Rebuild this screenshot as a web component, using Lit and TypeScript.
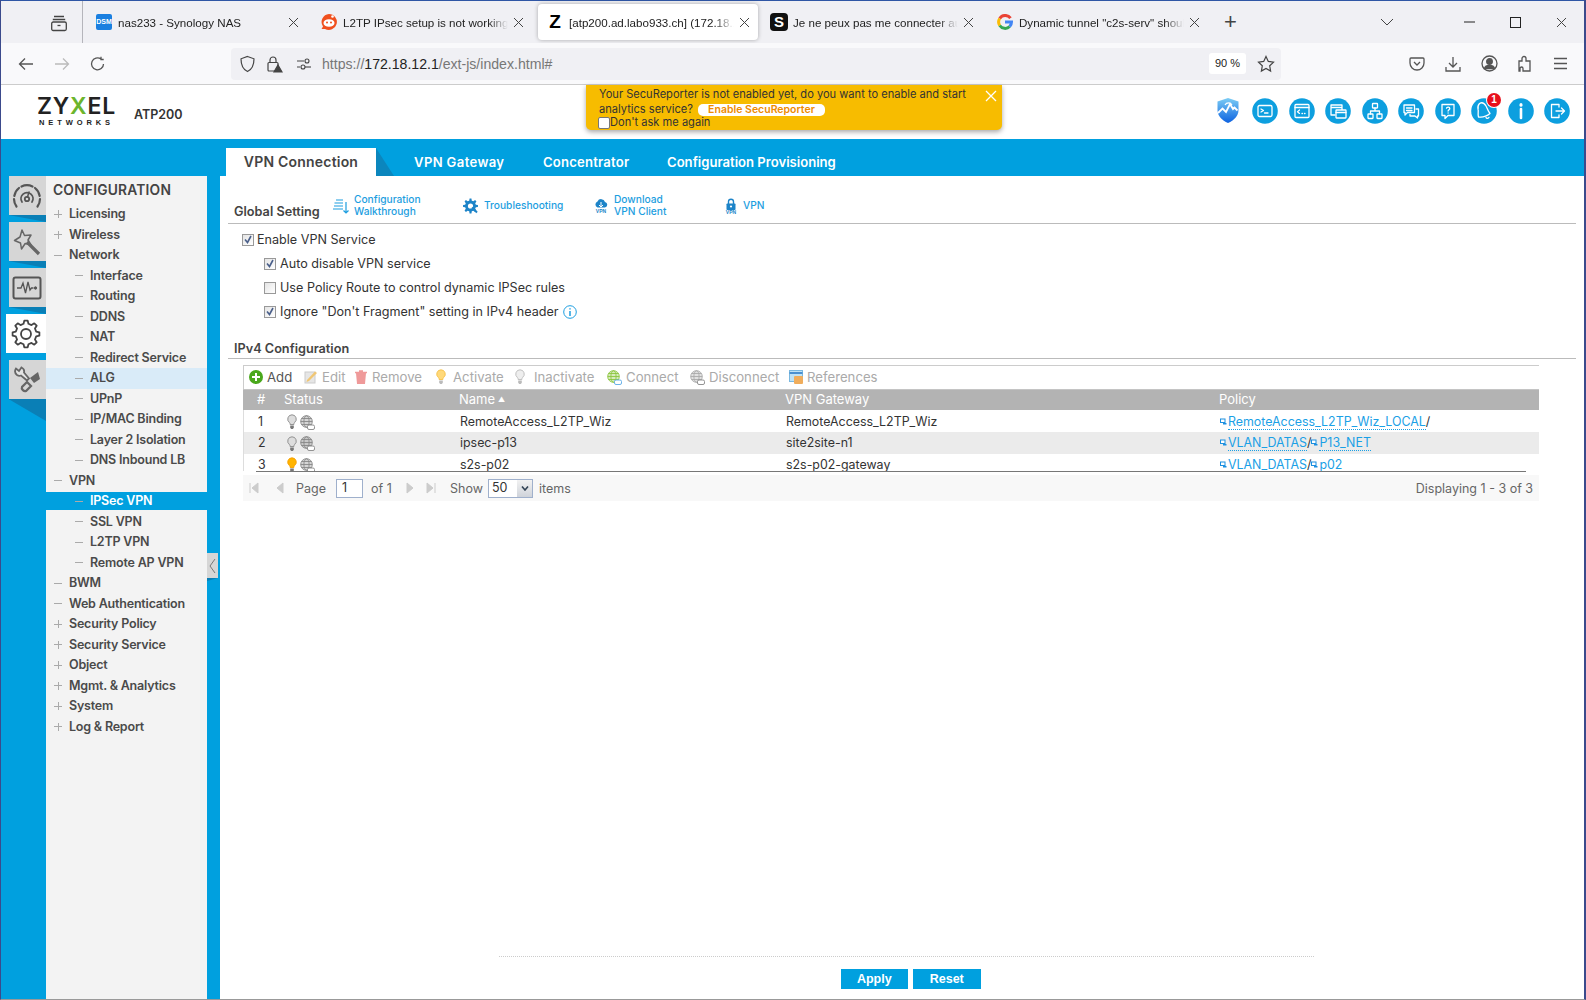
import {html, svg, css, LitElement} from 'lit';
import {customElement} from 'lit/decorators.js';

function gearPath(cx: number, cy: number, r1: number, r2: number, teeth: number) {
  const step = (Math.PI * 2) / teeth;
  let d = '';
  for (let i = 0; i < teeth; i++) {
    const a = i * step;
    const pts = [
      [r1, a - step * 0.3], [r2, a - step * 0.16], [r2, a + step * 0.16], [r1, a + step * 0.3]
    ];
    pts.forEach(([r, t], j) => {
      d += `${i === 0 && j === 0 ? 'M' : 'L'}${(cx + r * Math.cos(t)).toFixed(2)} ${(cy + r * Math.sin(t)).toFixed(2)}`;
    });
  }
  return d + 'Z';
}

const x10 = html`<svg width="11" height="11" viewBox="0 0 11 11"><path d="M1 1l9 9M10 1l-9 9" stroke="#444" stroke-width="1" fill="none"/></svg>`;

const bulb = (fill: string, stroke: string, base = '#777') => html`<svg width="10" height="16" viewBox="0 0 10 16"><path d="M5 .8a4.3 4.3 0 0 1 2.6 7.7c-.5.5-.7 1.100-.7 2H3.100c0-.9-.2-1.500-.7-2A4.300 4.300 0 0 1 5 .8z" fill=${fill} stroke=${stroke} stroke-width=".9"/><path d="M3.200 11.400h3.600v2.400l-1 1.300H4.200l-1-1.300z" fill=${base}/></svg>`;

const globe = (c: string, tag = '#888') => html`<svg width="15" height="15" viewBox="0 0 15 15" fill="none"><circle cx="6.500" cy="6.500" r="5.800" fill=${c} opacity=".35"/><g stroke=${c} stroke-width=".9"><circle cx="6.500" cy="6.500" r="5.800"/><ellipse cx="6.500" cy="6.500" rx="2.600" ry="5.800"/><path d="M.7 6.500h11.600M1.500 3.500h10M1.500 9.500h10"/></g><rect x="7.500" y="10" width="7" height="4.500" rx="1.500" fill="#fff" stroke=${tag} stroke-width=".9"/></svg>`;

const circ = (body: unknown) => html`<svg width="26" height="26" viewBox="0 0 26 26" fill="none"><circle cx="13" cy="13" r="12.800" fill="#0d9fdf"/><g stroke="#fff" stroke-width="1.300" stroke-linejoin="round" stroke-linecap="round">${body}</g></svg>`;

const headerIcons = [
  circ(svg`<rect x="6" y="7.500" width="14" height="11" rx="1.500"/><path d="M9 11l2.500 1.500L9 14M12.500 15h3.500"/>`),
  circ(svg`<rect x="6" y="6.500" width="14" height="13" rx="1"/><path d="M6 9.500h14M10.500 12l-2 1.700 2 1.700M13 15.500h.5M15.500 15.500h.5"/>`),
  circ(svg`<path d="M17 12V7H6v10h4M6 9.500h11"/><rect x="11" y="12" width="10" height="8" rx=".5" fill="#0d9fdf"/><path d="M11 14.500h10"/>`),
  circ(svg`<rect x="10.500" y="5.500" width="5" height="4.500" rx=".5"/><rect x="6" y="16" width="5" height="4.500" rx=".5"/><rect x="15" y="16" width="5" height="4.500" rx=".5"/><path d="M13 10v3M8.500 16v-3h9v3"/>`),
  circ(svg`<path d="M6 7h10.500v7.500h-7L7 17v-2.500H6zM8.500 10h5.500M8.500 12.500h5.500"/><path d="M18 11h2.500v7h-1v2l-2.500-2h-5v-1.500"/>`),
  circ(svg`<path d="M7 6.500h12v11h-6L10 20.500v-3H7z"/><path d="M11.500 10.200c.3-1.500 3.300-1.500 3.300.3 0 1.200-1.500 1.200-1.700 2.500M13.100 15v.1"/>`),
  circ(svg`<path d="M8.500 5.500c2.500-1.500 5 0 6.500 2.500 1.500 2.500 1.200 4 4 7.500-3 2.500-8 4-11.500 3.500-1-3.500.2-5-.4-7.300-.5-2.200 0-4.800 1.400-6.200zM15 19.500c.5 1.200 2.500 1 3-.2"/>`),
  circ(svg`<path d="M13 11v9" stroke-width="2.600"/><path d="M13 6.500v.8" stroke-width="3"/>`),
  circ(svg`<path d="M15 9V6.500H7.500v13H15V17M12 13h8M17.500 10l3 3-3 3"/>`)
];

const menu: [number, string, string?][] = [
  [1, 'Licensing', '+'], [1, 'Wireless', '+'], [1, 'Network', '-'],
  [2, 'Interface'], [2, 'Routing'], [2, 'DDNS'], [2, 'NAT'], [2, 'Redirect Service'],
  [2, 'ALG', 'hover'], [2, 'UPnP'], [2, 'IP/MAC Binding'], [2, 'Layer 2 Isolation'], [2, 'DNS Inbound LB'],
  [1, 'VPN', '-'], [2, 'IPSec VPN', 'sel'], [2, 'SSL VPN'], [2, 'L2TP VPN'], [2, 'Remote AP VPN'],
  [1, 'BWM', '-'], [1, 'Web Authentication', '-'], [1, 'Security Policy', '+'], [1, 'Security Service', '+'],
  [1, 'Object', '+'], [1, 'Mgmt. & Analytics', '+'], [1, 'System', '+'], [1, 'Log & Report', '+']
];

const dockIcons = [
  html`<svg width="32" height="28" viewBox="0 0 32 28" fill="none" stroke="#555" stroke-width="2.200" stroke-linecap="round"><path d="M5.500 24.500A13 13 0 0 1 3 17M3.300 14A13 13 0 0 1 8 6M10.500 4.500a13 13 0 0 1 11 0M24 6a13 13 0 0 1 4.700 8M29 17a13 13 0 0 1-2.500 7.500"/><path d="M11 20a6 6 0 1 1 10 0" stroke-width="1.800"/><circle cx="16" cy="17" r="2.200" stroke-width="1.800"/><path d="M16.500 15l1.500-5" stroke-width="1.500"/></svg>`,
  html`<svg width="28" height="28" viewBox="0 0 28 28" fill="none" stroke="#666" stroke-width="1.500" stroke-linejoin="round"><path d="M9 2l2.500 5.500L18 7l-3 5 3 5-5.800-1.500L8.500 21l-1-6L1.500 12.500 7 9z"/><path d="M14 14l12 12" stroke-width="3.200"/></svg>`,
  html`<svg width="30" height="24" viewBox="0 0 30 24" fill="none" stroke="#555"><rect x="1.500" y="1.500" width="27" height="21" rx="2" stroke-width="2"/><path d="M5 12h4l2-5 2.500 10 2.500-11 2 8 1.500-2h2" stroke-width="1.300"/><circle cx="23.500" cy="12" r="1.200" fill="#555"/></svg>`,
  html`<svg width="30" height="30" viewBox="0 0 30 30" fill="none" stroke="#444" stroke-width="1.800"><path d=${gearPath(15, 15, 10.5, 13.5, 8)} stroke-linejoin="round"/><circle cx="15" cy="15" r="5"/></svg>`,
  html`<svg width="28" height="30" viewBox="0 0 28 30" fill="none" stroke="#666" stroke-width="1.800"><path d="M3 3.500a5 5 0 0 0 1 6.500c1.500 1 3 1 4 .5l6 5 2-2-5-6c.5-2-.5-4-2.500-5L6 6 3 3.500z" fill="#e4e4e4"/><path d="M25 7l-8 6 4 5 6-4z" fill="#666" stroke="none"/><path d="M14 17l-5 5c-1 2 2 5 4 4l5-5z" fill="none" stroke-width="2.200"/></svg>`
];

const rows = [
  {n: 1, on: false, name: 'RemoteAccess_L2TP_Wiz', gw: 'RemoteAccess_L2TP_Wiz', pol: ['RemoteAccess_L2TP_Wiz_LOCAL', '']},
  {n: 2, on: false, name: 'ipsec-p13', gw: 'site2site-n1', pol: ['VLAN_DATAS', 'P13_NET']},
  {n: 3, on: true, name: 's2s-p02', gw: 's2s-p02-gateway', pol: ['VLAN_DATAS', 'p02']}
];

const netIcon = html`<svg width="7" height="7" viewBox="0 0 7 7"><rect x=".5" y="1" width="4.500" height="3.500" fill="#fff" stroke="#1b8fe0"/><path d="M3 5h3.500V6.500H3z" fill="#1b8fe0"/></svg>`;

@customElement('app-root')
export class AppRoot extends LitElement {
  static styles = css`
    :host {
      display: block;
      width: 1586px;
      height: 1000px;
      overflow: hidden;
      font-family: 'Inter', 'Liberation Sans', sans-serif;
      color: #333;
    }
    svg { display: block; flex: none; }
    .window {
      position: relative;
      box-sizing: border-box;
      width: 1586px;
      height: 1000px;
      display: flex;
      flex-direction: column;
      border-left: 1px solid #3b4a8c;
      border-right: 2px solid #3b4a8c;
      border-bottom: 1px solid #999;
      background: #fff;
    }
    /* browser chrome */
    .tabstrip {
      height: 43px;
      flex: none;
      display: flex;
      background: #f0f0f4;
      border-top: 1px solid #2f56a5;
      box-sizing: border-box;
      font-family: 'Liberation Sans', sans-serif;
      font-size: 11.600px;
    }
    .view { width: 82px; flex: none; display: flex; align-items: center; justify-content: flex-end; padding-right: 12px; box-sizing: border-box; border-right: 1px solid #b5b5bb; height: 43px; }
    .view svg { margin-right: 2px; }
    .tabs { display: grid; grid-template-columns: 225px 226px 224px 226px 225px; margin-left: 4px; flex: none; }
    .tab {
      display: flex;
      align-items: center;
      height: 36px;
      margin-top: 3px;
      margin-right: 4px;
      padding-left: 8px;
      gap: 5px;
      color: #222;
    }
    .tab.on { background: #fff; border-radius: 4px; box-shadow: 0 0 4px rgba(0,0,0,.3); }
    .fav { width: 18px; height: 18px; display: flex; align-items: center; justify-content: center; flex: none; }
    .tab .t { width: 165px; overflow: hidden; white-space: nowrap; -webkit-mask-image: linear-gradient(90deg, #000 88%, transparent); mask-image: linear-gradient(90deg, #000 88%, transparent); }
    .dsm { width: 16px; height: 16px; background: #1a7fe0; border-radius: 2px; color: #fff; font: bold 7px/16px 'Liberation Sans Narrow', 'Liberation Sans', sans-serif; text-align: center; }
    .zfav { font: bold 19px/18px 'Liberation Sans', sans-serif; color: #000; }
    .sfav { width: 18px; height: 18px; background: #111; border-radius: 4px; color: #fff; font: bold 15px/18px 'Liberation Sans', sans-serif; text-align: center; }
    .strip-end { display: flex; align-items: center; flex: 1; }
    .newtab { font-size: 22px; color: #444; margin-left: 11px; width: 156px; line-height: 1; }
    .ctl { display: flex; align-items: center; margin-left: 52px; }
    .ctl .c { width: 46px; display: flex; justify-content: center; }
    .toolbar {
      height: 42px;
      flex: none;
      box-sizing: border-box;
      background: #f9f9fb;
      border-bottom: 1px solid #ccc;
      display: flex;
      align-items: center;
      padding-left: 17px;
      font-family: 'Liberation Sans', sans-serif;
    }
    .nav { width: 36px; display: flex; justify-content: flex-start; flex: none; }
    .url {
      margin-left: 105px;
      width: 1050px;
      height: 32px;
      background: #f0f0f4;
      border-radius: 4px;
      display: flex;
      align-items: center;
      padding-left: 8px;
      box-sizing: border-box;
      flex: none;
    }
    .url .ml { margin-left: 10px; }
    .url .ml3 { margin-left: 13px; }
    .url .u { font-size: 14.100px; color: #777; margin-left: 10px; width: 887px; white-space: nowrap; }
    .url .u b { font-weight: 400; color: #222; }
    .zoom { background: #fff; width: 37px; height: 21px; border-radius: 3px; font-size: 11px; line-height: 21px; text-align: center; color: #222; }
    .star { margin-left: 11px; }
    .right-tools { display: grid; grid-template-columns: repeat(5, 35.900px); align-items: center; margin-left: 128px; }
    /* zyxel header */
    .brand {
      height: 54px;
      flex: none;
      background: #fff;
      display: flex;
      align-items: center;
      padding-left: 36px;
    }
    .logo { width: 79px; text-align: center; line-height: 1; }
    .logo .z { font: 600 23px/20px 'Inter', sans-serif; letter-spacing: .8px; color: #222; }
    .logo .z i { font-style: normal; color: #6cb52d; }
    .logo .net { font: 700 7.500px/10px 'Liberation Sans', sans-serif; letter-spacing: 3.900px; color: #222; margin-top: 2px; white-space: nowrap; }
    .model { font-size: 12.500px; font-weight: 600; margin-left: 18px; margin-top: 5px; color: #333; }
    .brand-icons { margin-left: auto; margin-right: 14px; display: flex; align-items: center; gap: 10.500px; margin-top: -3px; }
    .shield { margin-right: 2px; }
    .bell { position: relative; }
    .badge { position: absolute; right: -4px; top: -5px; width: 14px; height: 14px; border-radius: 50%; background: #e8101c; color: #fff; font: bold 10px/14px 'Liberation Sans', sans-serif; text-align: center; box-shadow: 0 0 0 1px #fff; }
    .banner {
      position: absolute;
      left: 585px;
      top: 85px;
      width: 416px;
      height: 45px;
      box-sizing: border-box;
      background: #f7bc00;
      border-radius: 0 0 5px 5px;
      box-shadow: 0 2px 5px rgba(0,0,0,.35);
      padding: 2px 20px 0 13px;
      font-size: 11.100px;
      line-height: 14.500px;
      color: #333;
      white-space: nowrap;
    }
    .banner .pill { display: inline-block; background: #fff; color: #ee8a00; font-weight: 600; font-size: 10.500px; border-radius: 5px; line-height: 12px; margin-left: 2px; width: 127px; text-align: center; }
    .banner .ask { display: flex; align-items: center; line-height: 13px; margin-left: -1px; }
    .banner .bx { width: 10px; height: 10px; background: #fff; border: 1px solid #777; border-radius: 2px; flex: none; }
    .banner .close { position: absolute; right: 5px; top: 5px; }
    /* blue frame */
    .main { flex: 1; background: #00a0df; display: flex; flex-direction: column; min-height: 0; }
    .subtabs { height: 37px; flex: none; display: flex; align-items: flex-end; padding-left: 225px; color: #fff; font-weight: 600; font-size: 13.100px; }
    .subtabs div { height: 28px; line-height: 28px; white-space: nowrap; }
    .subtabs .active { position: relative; width: 150px; background: #fff; color: #444; text-align: center; margin-right: 38px; font-size: 14px; letter-spacing: .2px; }
    .subtabs .active::after { content: ''; position: absolute; left: 100%; top: 0; width: 18px; height: 28px; background: #0b86bd; clip-path: polygon(0 0, 100% 100%, 0 100%); }
    .subtabs .g1 { width: 129px; letter-spacing: .35px; }
    .subtabs .g2 { width: 124px; letter-spacing: .2px; }
    .body { flex: 1; display: flex; min-height: 0; }
    .dock { width: 45px; flex: none; box-sizing: border-box; padding-left: 7.500px; display: flex; flex-direction: column; gap: 7px; }
    .dk { position: relative; height: 39px; background: #d6d6d6; display: flex; align-items: center; justify-content: center; }
    .dk::after { content: ''; position: absolute; left: 0; top: 100%; width: 100%; height: 7px; background: #0a7fb6; clip-path: polygon(0 0, 100% 0, 100% 100%); }
    .dk.on { background: #fff; margin-left: -3px; }
    .dk.on::after { display: none; }
    .dk.last::after { height: 22px; }
    .side { width: 161px; flex: none; background: #f3f3f3; box-sizing: border-box; }
    .side h3 { margin: 0; height: 28.200px; line-height: 29px; padding-left: 7px; font-size: 13.800px; font-weight: 600; color: #444; letter-spacing: .2px; }
    .it { height: 20.500px; line-height: 20.500px; display: flex; align-items: center; font-size: 12.500px; letter-spacing: -.2px; font-weight: 600; color: #4a4a4a; white-space: nowrap; }
    .it .mk { position: relative; width: 8px; height: 8px; flex: none; margin-right: 7px; }
    .it .mk::before { content: ''; position: absolute; left: 0; right: 0; top: 3.500px; height: 1px; background: #aaa; }
    .it.expand .mk::after { content: ''; position: absolute; top: 0; bottom: 0; left: 3.500px; width: 1px; background: #aaa; }
    .it.l1 { padding-left: 8px; }
    .it.l2 { padding-left: 29px; }
    .it.hover { background: #d9ebf8; }
    .it.sel { background: linear-gradient(#00a0df, #00a0df) center / 100% 18px no-repeat; color: #fff; }
    .handle-col { width: 13px; flex: none; position: relative; }
    .handle { position: absolute; left: 0; top: 377px; width: 11px; height: 25px; background: #d6d6d6; display: flex; align-items: center; justify-content: center; }
    .handle::after { content: ''; position: absolute; left: 0; top: 100%; width: 100%; height: 3px; background: #0a7fb6; clip-path: polygon(0 0, 100% 0, 0 100%); }
    /* content */
    .content { flex: 1; background: #fff; display: flex; flex-direction: column; min-width: 0; }
    .sect {
      margin: 0 8px;
      border-bottom: 1px solid #bbb;
      display: flex;
      align-items: flex-end;
      padding-left: 6px;
      font-size: 12.700px;
      font-weight: 600;
      color: #444;
      box-sizing: border-box;
    }
    .sect.top { height: 47.500px; padding-bottom: 4px; }
    .sect.ipv4 { height: 35px; padding-bottom: 2px; }
    .quick { display: grid; grid-template-columns: 130px 131px 131px 50px; align-self: stretch; font-size: 10.200px; font-weight: 500; line-height: 11.500px; color: #1d9ee0; }
    .sect.top .label { width: 99px; flex: none; }
    .q { display: flex; align-items: center; gap: 5px; height: 23px; margin-top: 18px; }
    .q .tight { margin-left: 1px; }
    .vpn-tag { font: 700 5px 'Liberation Sans', sans-serif; }
    .opts { padding: 4px 0 0 22px; font-size: 12.600px; color: #333; }
    .opt { height: 24px; display: flex; align-items: center; gap: 3px; white-space: nowrap; }
    .opt.sub { padding-left: 22px; gap: 4px; }
    .cb { width: 12px; height: 12px; box-sizing: border-box; border: 1px solid #999; background: linear-gradient(135deg, #e4e4e4, #fff); flex: none; display: flex; }
    /* grid panel */
    .panel { margin: 6px 45px 0 23px; }
    .pbar {
      height: 24px;
      box-sizing: border-box;
      border-top: 1px solid #ccc;
      border-left: 1px solid #ccc;
      display: grid;
      grid-template-columns: 55px 51px 81px 79px 92px 83px 99px 1fr;
      padding-left: 5px;
      align-items: center;
      font-size: 13.200px;
      color: #aaa;
    }
    .pbar > div { display: flex; align-items: center; gap: 4px; white-space: nowrap; }
    .pbar .add { color: #555; }
    .pbar .g2 { gap: 7px; }
    .pbar .g3 { gap: 9px; }
    .pbar .g1 { gap: 5px; }
    .thead, .tr { display: grid; grid-template-columns: 33px 175px 326px 434px 1fr; }
    .thead { height: 21px; line-height: 19px; font-size: 13px; background: #b3b3b3; color: #fff; border-top: 1px solid #c4c4c4; box-sizing: border-box; }
    .thead > div, .tr > div { padding-left: 8px; white-space: nowrap; overflow: hidden; }
    .thead > div:first-child, .tr > div:first-child { padding-left: 14px; }
    .tr { height: 21.500px; line-height: 21.500px; color: #333; font-size: 12.400px; }
    .tr:nth-child(even) { background: #ebebeb; }
    .tbody { height: 61px; box-sizing: border-box; padding-top: 1px; overflow: hidden; border-left: 1px solid #ddd; }
    .tr > .st { display: flex; align-items: center; gap: 3px; padding-top: 2px; padding-left: 10px; box-sizing: border-box; }
    .pol { display: flex; align-items: center; gap: 0; }
    .lk { color: #1aa0e6; margin-left: 1px; }
    .lk span { border-bottom: 1px dotted #1aa0e6; line-height: 15px; display: inline-block; }
    .sortmark { font-size: 7px; vertical-align: 2px; margin-left: 3px; }
    .rule { height: 1.500px; background: #777; margin: 0 13px; }
    .pfoot {
      margin-top: 3px;
      height: 26px;
      background: #f8f8f8;
      display: flex;
      align-items: center;
      font-size: 12.500px;
      color: #666;
    }
    .pfoot .arr { width: 27px; flex: none; display: flex; }
    .pfoot .a1 { margin-left: 5px; }
    .pfoot .a2 { width: 21px; }
    .pfoot .a3 { width: 21px; }
    .pfoot .a4 { width: 25px; }
    .pfoot .page { width: 40px; }
    .pfoot .of { margin-left: 8px; width: 33px; }
    .pfoot .show { width: 38px; }
    .pfoot .items { margin-left: 6px; }
    .pfoot .in { box-sizing: border-box; width: 27px; height: 19px; border: 1px solid #9fb0cc; background: #fff; color: #333; padding-left: 5px; line-height: 15px; }
    .pfoot .sel { box-sizing: border-box; width: 45px; height: 19px; border: 1px solid #9fb0cc; background: #fff; color: #333; display: flex; line-height: 15px; padding-left: 3px; justify-content: space-between; }
    .pfoot .sel i { width: 15px; margin: 0 0 0 auto; background: linear-gradient(#f2f2f2, #cfd3da); display: flex; align-items: center; justify-content: center; }
    .pfoot .disp { margin-left: auto; margin-right: 6px; }
    .spacer { flex: 1; }
    .actions { margin: 0 270px 0 279px; border-top: 1px dotted #ccc; height: 43px; display: flex; justify-content: center; gap: 5px; padding: 12px 0 0 8px; box-sizing: border-box; }
    .btn { width: 67.500px; height: 20px; background: #00a0df; color: #fff; font: bold 12.500px/20px 'Liberation Sans', sans-serif; text-align: center; }
  `;

  render() {
    return html`
      <div class="window">
        ${this.renderTabstrip()}
        ${this.renderToolbar()}
        ${this.renderBrand()}
        <div class="main">
          <div class="subtabs">
            <div class="active">VPN Connection</div>
            <div class="g1">VPN Gateway</div>
            <div class="g2">Concentrator</div>
            <div>Configuration Provisioning</div>
          </div>
          <div class="body">
            <div class="dock">
              ${dockIcons.map((icon, idx) => html`<div class="dk ${idx === 3 ? 'on' : ''} ${idx === 4 ? 'last' : ''}">${icon}</div>`)}
            </div>
            <div class="side">
              <h3>CONFIGURATION</h3>
              ${menu.map(([lvl, label, mod]) => html`
                <div class="it l${lvl} ${mod === '+' ? 'expand' : ''} ${mod === 'hover' || mod === 'sel' ? mod : ''}"><span class="mk"></span>${label}</div>
              `)}
            </div>
            <div class="handle-col">
              <div class="handle"><svg width="7" height="16" viewBox="0 0 7 16" fill="none"><path d="M6 1L1 8l5 7" stroke="#777"/></svg></div>
            </div>
            ${this.renderContent()}
          </div>
        </div>
        ${this.renderBanner()}
      </div>
    `;
  }

  renderTabstrip() {
    const titles = [
      {icon: html`<div class="dsm">DSM</div>`, t: 'nas233 - Synology NAS'},
      {icon: html`<svg width="18" height="18" viewBox="0 0 18 18"><path d="M9 1a8 8 0 1 1-4 15H1.500L3 13.500A8 8 0 0 1 9 1z" fill="#f0501e"/><ellipse cx="9" cy="10" rx="5.500" ry="3.800" fill="#fff"/><circle cx="7" cy="9.500" r="1" fill="#f0501e"/><circle cx="11" cy="9.500" r="1" fill="#f0501e"/><circle cx="12.500" cy="3.500" r="1.300" fill="#fff"/></svg>`, t: 'L2TP IPsec setup is not working'},
      {icon: html`<div class="zfav">Z</div>`, t: '[atp200.ad.labo933.ch] (172.18.12.1)', on: true},
      {icon: html`<div class="sfav">S</div>`, t: 'Je ne peux pas me connecter au VPN'},
      {icon: html`<svg width="16" height="16" viewBox="0 0 16 16" fill="none" stroke-width="3"><path d="M13.500 4.200A6.500 6.500 0 0 0 2.700 4.500" stroke="#ea4335"/><path d="M2.700 4.500a6.500 6.500 0 0 0 0 7" stroke="#fbbc05"/><path d="M2.700 11.500a6.500 6.500 0 0 0 10 1" stroke="#34a853"/><path d="M12.700 12.500A6.500 6.500 0 0 0 14.500 8H8" stroke="#4285f4"/></svg>`, t: 'Dynamic tunnel "c2s-serv" should be up'}
    ];
    return html`
      <div class="tabstrip">
        <div class="view">
          <svg width="18" height="18" viewBox="0 0 18 18" fill="none" stroke="#444" stroke-width="1.300"><path d="M4 2.500h10M2.800 5.500h12.400"/><rect x="1.700" y="8" width="14.600" height="8.500" rx="1.500"/><path d="M7.500 11.500h3"/></svg>
        </div>
        <div class="tabs">
          ${titles.map(tab => html`
            <div class="tab ${tab.on ? 'on' : ''}">
              <div class="fav">${tab.icon}</div>
              <div class="t">${tab.t}</div>
              ${x10}
            </div>
          `)}
        </div>
        <div class="strip-end">
          <div class="newtab">+</div>
          <svg width="14" height="8" viewBox="0 0 14 8" fill="none"><path d="M1 1l6 6 6-6" stroke="#444"/></svg>
          <div class="ctl">
            <div class="c"><svg width="11" height="2"><path d="M0 1h11" stroke="#222"/></svg></div>
            <div class="c"><svg width="11" height="11"><rect x=".5" y=".5" width="10" height="10" fill="none" stroke="#222"/></svg></div>
            <div class="c">${x10}</div>
          </div>
        </div>
      </div>
    `;
  }

  renderToolbar() {
    return html`
      <div class="toolbar">
        <div class="nav"><svg width="16" height="14" viewBox="0 0 16 14" fill="none" stroke="#555" stroke-width="1.300"><path d="M15 7H1.500M7 1.500L1.500 7 7 12.500"/></svg></div>
        <div class="nav"><svg width="16" height="14" viewBox="0 0 16 14" fill="none" stroke="#bbb" stroke-width="1.300"><path d="M1 7h13.500M9 1.500L14.500 7 9 12.500"/></svg></div>
        <div class="nav"><svg width="16" height="16" viewBox="0 0 16 16" fill="none" stroke="#555" stroke-width="1.300"><path d="M13.500 8A6 6 0 1 1 11 3M11 .8V3.500H13.700"/></svg></div>
        <div class="url">
          <svg width="17" height="18" viewBox="0 0 17 18" fill="none" stroke="#444" stroke-width="1.200"><path d="M8.500 1.500l6.500 2.300c0 6-1.500 10.500-6.500 12.700C3.500 14.300 2 9.800 2 3.800z"/></svg>
          <svg class="ml" width="17" height="18" viewBox="0 0 17 18" fill="none" stroke="#444" stroke-width="1.200"><rect x="2" y="7.500" width="10" height="8.500" rx="1"/><path d="M4 7.500V5a3 3 0 0 1 6 0v2.500"/><path d="M12 10l4 7H8z" fill="#444"/></svg>
          <svg class="ml3" width="16" height="14" viewBox="0 0 16 14" fill="none" stroke="#444" stroke-width="1.100"><path d="M1 4h7M1 10h3"/><circle cx="11" cy="4" r="2"/><circle cx="7" cy="10" r="2"/><path d="M9 10h6"/></svg>
          <div class="u">https://<b>172.18.12.1</b>/ext-js/index.html#</div>
          <div class="zoom">90 %</div>
          <svg class="star" width="18" height="18" viewBox="0 0 18 18" fill="none" stroke="#444" stroke-width="1.200"><path d="M9 1.500l2.300 4.900 5.200.7-3.800 3.700.9 5.300L9 13.500l-4.600 2.600.9-5.300L1.500 7.100l5.200-.7z"/></svg>
        </div>
        <div class="right-tools">
          <svg width="16" height="16" viewBox="0 0 16 16" fill="none" stroke="#555" stroke-width="1.300"><path d="M2 2h12a1 1 0 0 1 1 1v4a7 7 0 0 1-14 0V3a1 1 0 0 1 1-1z"/><path d="M5 6l3 3 3-3"/></svg>
          <svg width="16" height="16" viewBox="0 0 16 16" fill="none" stroke="#555" stroke-width="1.300"><path d="M8 1v10M4 7l4 4 4-4M1 11v4h14v-4"/></svg>
          <svg width="17" height="17" viewBox="0 0 17 17" fill="none" stroke="#555" stroke-width="1.300"><circle cx="8.500" cy="8.500" r="7.500"/><circle cx="8.500" cy="6.500" r="2.800" fill="#555"/><path d="M3.500 13.500c1-4 9-4 10 0z" fill="#555"/></svg>
          <svg width="16" height="17" viewBox="0 0 16 17" fill="none" stroke="#555" stroke-width="1.300"><path d="M2 6h3V3.500a2 2 0 0 1 4 0V6h4v10H6v-2.500a1.500 1.500 0 0 0-3 0V16H2z"/></svg>
          <svg width="15" height="13" viewBox="0 0 15 13" fill="none" stroke="#555" stroke-width="1.300"><path d="M1 1.500h13M1 6.500h13M1 11.500h13"/></svg>
        </div>
      </div>
    `;
  }

  renderBrand() {
    return html`
      <div class="brand">
        <div class="logo">
          <div class="z">ZY<i>X</i>EL</div>
          <div class="net">NETWORKS</div>
        </div>
        <div class="model">ATP200</div>
        <div class="brand-icons">
          <svg class="shield" width="24" height="27" viewBox="0 0 24 27"><defs><linearGradient id="sh" x1="0" y1="0" x2="0" y2="1"><stop offset="0" stop-color="#7ccdf5"/><stop offset="1" stop-color="#0d62e0"/></linearGradient></defs><path d="M12 1l10.500 3.500V13c0 6-4.500 10.500-10.500 13C6 23.500 1.500 19 1.500 13V4.500z" fill="url(#sh)"/><path d="M2 16l4.500-4.500 3.500 3.500 4-8 3 5 1.500-1.500 3 3" fill="none" stroke="#fff" stroke-width="1.800"/><path d="M9 8a4 4 0 0 1 7 0" fill="none" stroke="#fff" stroke-width="1.200"/></svg>
          ${headerIcons.map((icon, idx) => idx === 6
            ? html`<div class="bell">${icon}<div class="badge">1</div></div>`
            : icon)}
        </div>
      </div>
    `;
  }

  renderBanner() {
    return html`
      <div class="banner">
        Your SecuReporter is not enabled yet, do you want to enable and start
        <br>analytics service? <span class="pill">Enable SecuReporter</span>
        <div class="ask"><span class="bx"></span>Don't ask me again</div>
        <svg class="close" width="12" height="12" viewBox="0 0 12 12"><path d="M1 1l10 10M11 1L1 11" stroke="#fff" stroke-width="1.300"/></svg>
      </div>
    `;
  }

  checkbox(on: boolean) {
    return html`<span class="cb">${on ? html`<svg width="10" height="10" viewBox="0 0 10 10" fill="none"><path d="M2 4.500l2.500 3L8 1" stroke="#4a5f8a" stroke-width="1.600"/></svg>` : ''}</span>`;
  }

  renderContent() {
    return html`
      <div class="content">
        <div class="sect top">
          <div class="label">Global Setting</div>
          <div class="quick">
            <div class="q">
              <svg width="16" height="16" viewBox="0 0 16 16" fill="none" stroke="#1d9ee0" stroke-width="1.200"><path d="M3 2h7M1.500 5h8.500M1 8h9M0 11h10M13 4v11M10.500 12.500L13 15l2.500-2.500"/></svg>
              <div>Configuration<br>Walkthrough</div>
            </div>
            <div class="q">
              <svg width="16" height="16" viewBox="0 0 16 16"><path d=${gearPath(7.5, 8, 5.5, 7.5, 8)} fill="#1d84c8"/><circle cx="7.500" cy="8" r="2.600" fill="#fff"/><path d="M9 9.500l5 5" stroke="#1d84c8" stroke-width="2"/></svg>
              <div>Troubleshooting</div>
            </div>
            <div class="q">
              <svg width="14" height="16" viewBox="0 0 14 16"><path d="M3.500 9.500A3.200 3.200 0 0 1 3.500 3.500 4 4 0 0 1 11 4a2.800 2.800 0 0 1 0 5.500z" fill="#1d84c8"/><path d="M7 4v5M5 7l2 2 2-2" stroke="#fff" fill="none"/><text class="vpn-tag" x="7" y="15" text-anchor="middle" fill="#1d84c8">VPN</text></svg>
              <div class="tight">Download<br>VPN Client</div>
            </div>
            <div class="q">
              <svg width="12" height="16" viewBox="0 0 12 16"><path d="M3.500 6V3.700a2.500 2.500 0 0 1 5 0V6" stroke="#1d84c8" fill="none" stroke-width="1.400"/><rect x="1.500" y="5.500" width="9" height="6.500" rx=".8" fill="#1d84c8"/><circle cx="6" cy="8.500" r="1.100" fill="#fff"/><text class="vpn-tag" x="6" y="16" text-anchor="middle" fill="#1d84c8">VPN</text></svg>
              <div class="tight">VPN</div>
            </div>
          </div>
        </div>
        <div class="opts">
          <div class="opt">${this.checkbox(true)}Enable VPN Service</div>
          <div class="opt sub">${this.checkbox(true)}Auto disable VPN service</div>
          <div class="opt sub">${this.checkbox(false)}Use Policy Route to control dynamic IPSec rules</div>
          <div class="opt sub">${this.checkbox(true)}Ignore "Don't Fragment" setting in IPv4 header
            <svg width="14" height="14" viewBox="0 0 14 14" fill="none" stroke="#1d9ee0"><circle cx="7" cy="7" r="6.300"/><path d="M7 6v5" stroke-width="1.500"/><path d="M7 3.200v1.300" stroke-width="1.500"/></svg>
          </div>
        </div>
        <div class="sect ipv4">IPv4 Configuration</div>
        <div class="panel">
          <div class="pbar">
            <div class="add"><svg width="14" height="14" viewBox="0 0 14 14"><circle cx="7" cy="7" r="7" fill="#4aa81c"/><path d="M7 3v8M3 7h8" stroke="#fff" stroke-width="2"/></svg>Add</div>
            <div><svg width="14" height="14" viewBox="0 0 14 14"><rect x="1" y="2" width="10" height="11" fill="#e6e6e6" stroke="#ccc"/><path d="M3 10L11 1.500l2 1.500-8 8-2.500 1z" fill="#f0c674"/></svg>Edit</div>
            <div class="g1"><svg width="12" height="14" viewBox="0 0 12 14"><path d="M1 3h10l-1 11H2z" fill="#ef9a9a"/><path d="M0 2.500h12M4 1h4" stroke="#ef9a9a" stroke-width="1.500"/></svg>Remove</div>
            <div class="g2">${bulb('#ffd97a', '#f5c04a', '#bbb')}Activate</div>
            <div class="g3">${bulb('#eee', '#bbb', '#bbb')}Inactivate</div>
            <div>${globe('#8cc63f', '#5aa9e6')}Connect</div>
            <div>${globe('#aaa')}Disconnect</div>
            <div><svg width="14" height="14" viewBox="0 0 14 14"><rect x=".5" y=".5" width="13" height="11" fill="#bfe3f7" stroke="#7ab8e0"/><path d="M.5 3h13" stroke="#4a90d0" stroke-width="2"/><rect x="5" y="6" width="9" height="8" rx="1" fill="#f0ad5c"/></svg>References</div>
          </div>
          <div class="thead">
            <div>#</div><div>Status</div><div>Name<span class="sortmark">▲</span></div><div>VPN Gateway</div><div>Policy</div>
          </div>
          <div class="tbody">
            ${rows.map(r => html`
              <div class="tr">
                <div>${r.n}</div>
                <div class="st">${r.on ? bulb('#ffb400', '#f59e00') : bulb('#ddd', '#888')}${globe('#888')}</div>
                <div>${r.name}</div>
                <div>${r.gw}</div>
                <div class="pol">
                  ${netIcon}<a class="lk"><span>${r.pol[0]}</span></a>/${r.pol[1] ? html`${netIcon}<a class="lk"><span>${r.pol[1]}</span></a>` : ''}
                </div>
              </div>
            `)}
          </div>
          <div class="rule"></div>
          <div class="pfoot">
            <div class="arr a1">${this.pager('M2 1v10M10 1v10L4 6z')}</div>
            <div class="arr a2">${this.pager('M8 1v10L2 6z')}</div>
            <div class="page">Page</div>
            <div class="in">1</div>
            <div class="of">of 1</div>
            <div class="arr a3">${this.pager('M3 1v10L9 6z')}</div>
            <div class="arr a4">${this.pager('M2 1v10L8 6zM10 1v10')}</div>
            <div class="show">Show</div>
            <div class="sel">50<i><svg width="8" height="5" viewBox="0 0 8 5" fill="none"><path d="M1 .5L4 4 7 .5" stroke="#345" stroke-width="1.600"/></svg></i></div>
            <div class="items">items</div>
            <div class="disp">Displaying 1 - 3 of 3</div>
          </div>
        </div>
        <div class="spacer"></div>
        <div class="actions">
          <div class="btn">Apply</div>
          <div class="btn">Reset</div>
        </div>
      </div>
    `;
  }

  pager(d: string) {
    return html`<svg width="12" height="12" viewBox="0 0 12 12"><path d=${d} fill="#ccc" stroke="#ccc"/></svg>`;
  }
}
